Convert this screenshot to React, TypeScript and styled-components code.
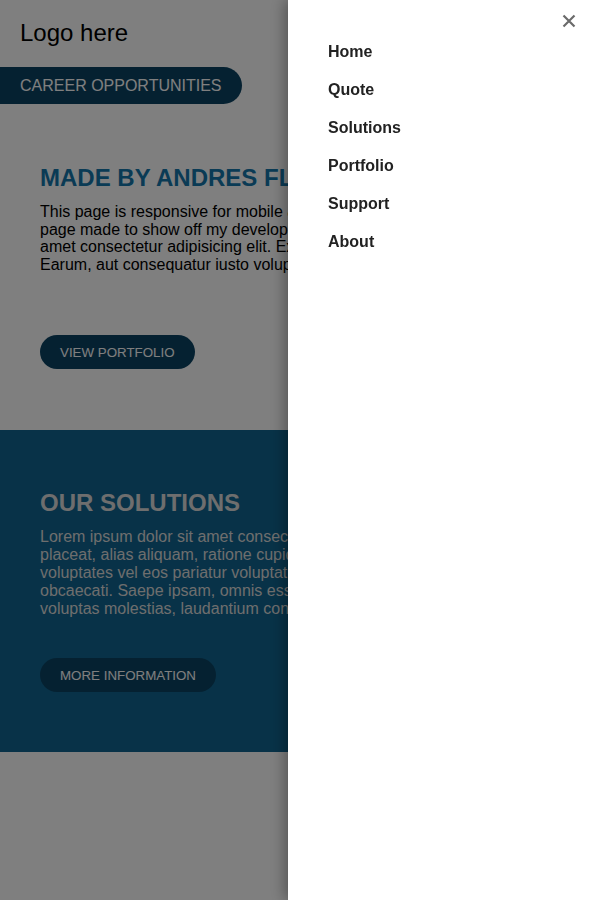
import React from "react";
import styled, { createGlobalStyle } from "styled-components";

const GlobalStyle = createGlobalStyle`
  html, body {
    margin: 0;
    padding: 0;
    background: #ffffff;
    font-family: "Liberation Sans", Arial, Helvetica, sans-serif;
    overflow: hidden;
  }
  * { box-sizing: border-box; }
`;

const Page = styled.div`
  min-height: 100vh;
  background: #ffffff;
`;

const Header = styled.header`
  display: flex;
  flex-direction: column;
  align-items: flex-start;
  padding-top: 19px;
`;

const Logo = styled.div`
  font-size: 24px;
  line-height: 28px;
  color: #000;
  padding-left: 20px;
`;

const CareerButton = styled.a`
  display: flex;
  align-items: center;
  margin-top: 20px;
  width: 242px;
  height: 37px;
  padding-left: 20px;
  background: #0b4363;
  color: #ffffff;
  font-size: 16px;
  text-transform: uppercase;
  border-radius: 0 19px 19px 0;
  text-decoration: none;
`;

const Section = styled.section<{ $dark?: boolean; $top: number; $bottom: number }>`
  padding: ${(p) => p.$top}px 40px ${(p) => p.$bottom}px;
  background: ${(p) => (p.$dark ? "#106590" : "transparent")};
  color: ${(p) => (p.$dark ? "#dcdcdc" : "#000")};
`;

const Heading = styled.h2<{ $dark?: boolean }>`
  margin: 0;
  font-size: 24px;
  line-height: 28px;
  font-weight: 700;
  text-transform: uppercase;
  color: ${(p) => (p.$dark ? "#dcdcdc" : "#1576ab")};
`;

const Text = styled.p<{ $lh: number }>`
  margin: 11px 0 0;
  font-size: 16px;
  line-height: ${(p) => p.$lh}px;
  white-space: nowrap;
`;

const PillButton = styled.a<{ $gap: number }>`
  display: inline-flex;
  align-items: center;
  height: 34px;
  margin-top: ${(p) => p.$gap}px;
  padding: 0 20px;
  border-radius: 17px;
  background: #0b4363;
  color: #ffffff;
  font-size: 13.333px;
  text-transform: uppercase;
  text-decoration: none;
`;

const Overlay = styled.div`
  position: fixed;
  inset: 0;
  background: rgba(0, 0, 0, 0.5);
`;

const Drawer = styled.aside`
  position: fixed;
  top: 0;
  right: 0;
  width: 302px;
  height: 100vh;
  background: #ffffff;
  box-shadow: -3px 0 14px rgba(0, 0, 0, 0.35);
`;

const CloseButton = styled.button`
  position: absolute;
  top: 9px;
  right: 9px;
  width: 24px;
  height: 24px;
  padding: 0;
  border: none;
  background: none;
  display: flex;
  align-items: center;
  justify-content: center;
  cursor: pointer;
`;

const NavList = styled.nav`
  display: flex;
  flex-direction: column;
  gap: 18px;
  padding: 42px 40px 0;
`;

const NavLink = styled.a`
  font-size: 16px;
  line-height: 20px;
  font-weight: 700;
  color: #222222;
  text-decoration: none;
`;

const navItems = ["Home", "Quote", "Solutions", "Portfolio", "Support", "About"];

export default function App() {
  return (
    <>
      <GlobalStyle />
      <Page>
        <Header>
          <Logo>Logo here</Logo>
          <CareerButton href="#">Career Opportunities</CareerButton>
        </Header>
        <Section $top={60} $bottom={61}>
          <Heading>Made by Andres Flores</Heading>
          <Text $lh={17.5}>
            This page is responsive for mobile and desktop, a landing
            <br />
            page made to show off my development skills. Lorem ipsum dolor sit
            <br />
            amet consectetur adipisicing elit. Exercitationem, quos.
            <br />
            Earum, aut consequatur iusto voluptatum.
          </Text>
          <PillButton href="#" $gap={62}>View Portfolio</PillButton>
        </Section>
        <Section $dark $top={59} $bottom={60}>
          <Heading $dark>Our Solutions</Heading>
          <Text $lh={18}>
            Lorem ipsum dolor sit amet consectetur adipisicing elit. Quis
            <br />
            placeat, alias aliquam, ratione cupiditate nemo earum
            <br />
            voluptates vel eos pariatur voluptatum quaerat
            <br />
            obcaecati. Saepe ipsam, omnis esse dolorum
            <br />
            voluptas molestias, laudantium consequuntur.
          </Text>
          <PillButton href="#" $gap={40}>More Information</PillButton>
        </Section>
      </Page>
      <Overlay />
      <Drawer>
        <CloseButton aria-label="Close menu">
          <svg width="14" height="14" viewBox="0 0 14 14">
            <path d="M1.5 1.5 L12.5 12.5 M12.5 1.5 L1.5 12.5" stroke="#6b6b6b" strokeWidth="2.2" strokeLinecap="butt" />
          </svg>
        </CloseButton>
        <NavList>
          {navItems.map((item) => (
            <NavLink key={item} href="#">{item}</NavLink>
          ))}
        </NavList>
      </Drawer>
    </>
  );
}
